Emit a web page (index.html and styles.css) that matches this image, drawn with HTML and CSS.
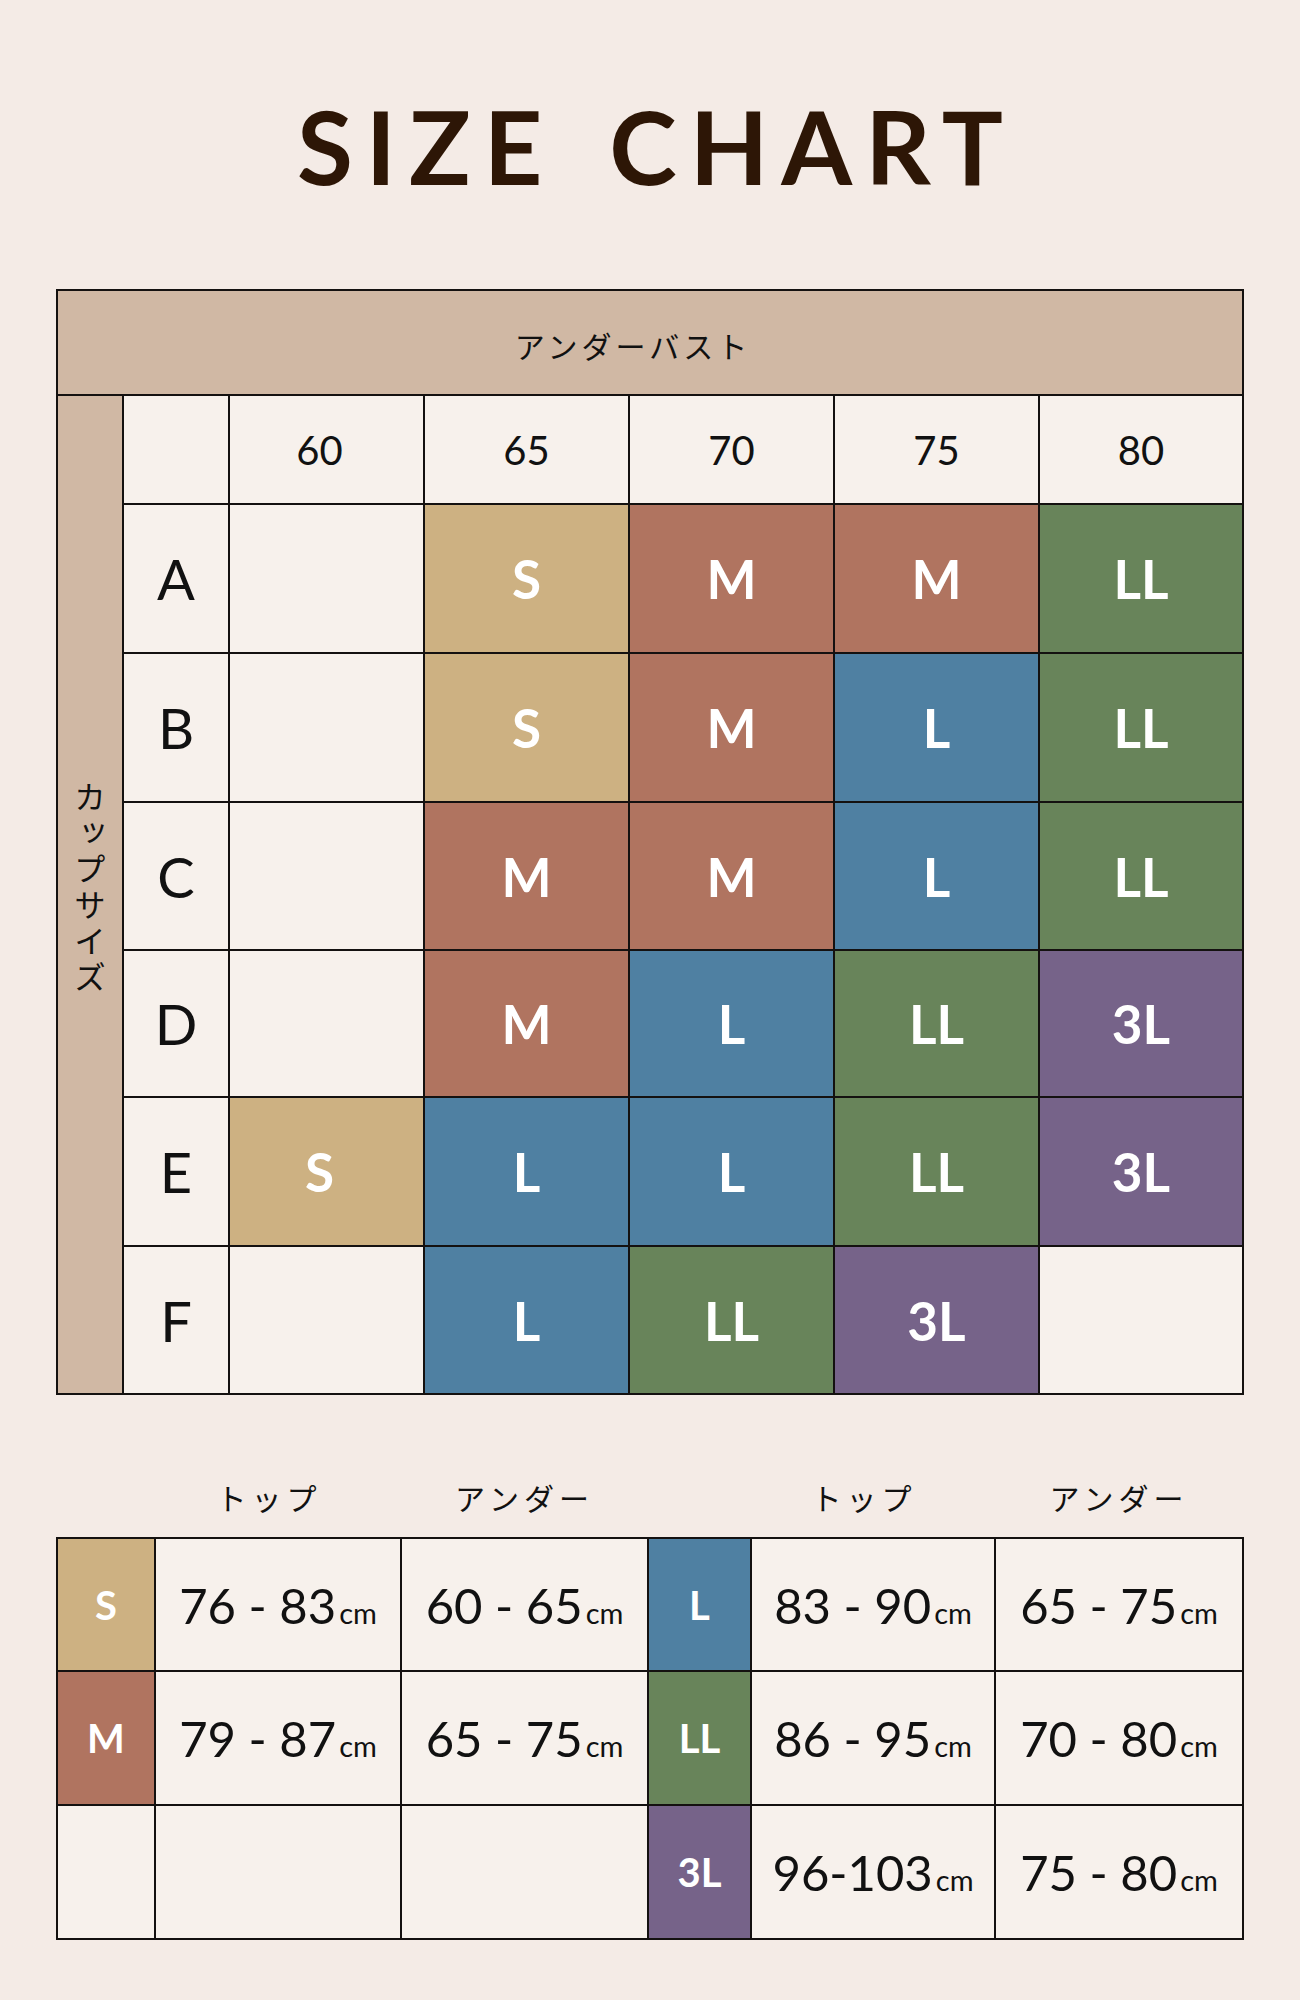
FILE: index.html
```html
<!DOCTYPE html>
<html lang="ja">
<head>
<meta charset="utf-8">
<title>SIZE CHART</title>
<link rel="stylesheet" href="styles.css">
</head>
<body>
<div class="page">
  <h1 class="title">SIZE CHART</h1>

  <div class="chart">
    <div class="hdr">アンダーバスト</div>
    <div class="cup"><span>カップサイズ</span></div>

    <div class="cell"></div>
    <div class="cell num c60">60</div>
    <div class="cell num">65</div>
    <div class="cell num">70</div>
    <div class="cell num">75</div>
    <div class="cell num">80</div>

    <div class="cell letter">A</div>
    <div class="cell"></div>
    <div class="cell sz s">S</div>
    <div class="cell sz m">M</div>
    <div class="cell sz m">M</div>
    <div class="cell sz ll">LL</div>

    <div class="cell letter">B</div>
    <div class="cell"></div>
    <div class="cell sz s">S</div>
    <div class="cell sz m">M</div>
    <div class="cell sz l">L</div>
    <div class="cell sz ll">LL</div>

    <div class="cell letter">C</div>
    <div class="cell"></div>
    <div class="cell sz m">M</div>
    <div class="cell sz m">M</div>
    <div class="cell sz l">L</div>
    <div class="cell sz ll">LL</div>

    <div class="cell letter">D</div>
    <div class="cell"></div>
    <div class="cell sz m">M</div>
    <div class="cell sz l">L</div>
    <div class="cell sz ll">LL</div>
    <div class="cell sz xl">3L</div>

    <div class="cell letter">E</div>
    <div class="cell sz s c60">S</div>
    <div class="cell sz l">L</div>
    <div class="cell sz l">L</div>
    <div class="cell sz ll">LL</div>
    <div class="cell sz xl">3L</div>

    <div class="cell letter">F</div>
    <div class="cell"></div>
    <div class="cell sz l">L</div>
    <div class="cell sz ll">LL</div>
    <div class="cell sz xl">3L</div>
    <div class="cell"></div>
  </div>

  <div class="legend-head">
    <div></div>
    <div class="lh top">トップ</div>
    <div class="lh">アンダー</div>
    <div></div>
    <div class="lh top">トップ</div>
    <div class="lh">アンダー</div>
  </div>

  <div class="legend">
    <div class="cell lab s">S</div>
    <div class="cell range"><span>76 - 83<span class="cm">cm</span></span></div>
    <div class="cell range"><span>60 - 65<span class="cm">cm</span></span></div>
    <div class="cell lab l">L</div>
    <div class="cell range"><span>83 - 90<span class="cm">cm</span></span></div>
    <div class="cell range"><span>65 - 75<span class="cm">cm</span></span></div>

    <div class="cell lab m">M</div>
    <div class="cell range"><span>79 - 87<span class="cm">cm</span></span></div>
    <div class="cell range"><span>65 - 75<span class="cm">cm</span></span></div>
    <div class="cell lab ll">LL</div>
    <div class="cell range"><span>86 - 95<span class="cm">cm</span></span></div>
    <div class="cell range"><span>70 - 80<span class="cm">cm</span></span></div>

    <div class="cell"></div>
    <div class="cell"></div>
    <div class="cell"></div>
    <div class="cell lab xl">3L</div>
    <div class="cell range"><span>96-103<span class="cm">cm</span></span></div>
    <div class="cell range"><span>75 - 80<span class="cm">cm</span></span></div>
  </div>
</div>
</body>
</html>
```

FILE: styles.css
```css
html, body {
  margin: 0;
  padding: 0;
  background: #f4ebe6;
}

body {
  min-height: 2000px;
  font-family: "Lato", "Noto Sans CJK JP", sans-serif;
  color: #111;
}

.page {
  width: 1188px;
  margin: 0 auto;
  padding-top: 86px;
}

.title {
  margin: 0;
  height: 120px;
  font-size: 102px;
  line-height: 120px;
  font-weight: 700;
  letter-spacing: 13px;
  word-spacing: 16px;
  padding-left: 13px;
  text-align: center;
  color: #2d1606;
}

/* main chart */
.chart {
  margin-top: 83px;
  display: grid;
  grid-template-columns: 64px 104px 193px 203px 203px 203px 202px;
  grid-template-rows: 103px 107px 147px 147px 146px 145px 147px 146px;
  gap: 2px;
  padding: 2px;
  background: #141110;
}

.cell {
  background: #f7f1ec;
  display: flex;
  align-items: center;
  justify-content: center;
}

.c60 {
  padding-right: 14px;
}

.hdr {
  grid-column: 1 / -1;
  grid-row: 1;
  background: #d0b8a4;
  display: flex;
  align-items: center;
  justify-content: center;
  font-family: "Noto Sans CJK JP", sans-serif;
  font-size: 30px;
  letter-spacing: 4px;
  padding-top: 4px;
  padding-right: 34px;
}

.cup {
  grid-column: 1;
  grid-row: 2 / -1;
  background: #d0b8a4;
  display: flex;
  align-items: center;
  justify-content: center;
}

.cup span {
  writing-mode: vertical-rl;
  font-family: "Noto Sans CJK JP", sans-serif;
  font-size: 32px;
  letter-spacing: 4px;
  margin-top: -12px;
}

.num {
  font-size: 40px;
}

.letter {
  font-size: 56px;
}

.sz {
  font-size: 53px;
  font-weight: 700;
}

.s { background: #cdb182; color: #fff; }
.m { background: #b07460; color: #fff; }
.l { background: #4f80a2; color: #fff; }
.ll { background: #68845a; color: #fff; }
.xl { background: #766389; color: #fff; }

/* legend */
.legend-head {
  margin-top: 72px;
  height: 60px;
  margin-bottom: 10px;
  display: grid;
  grid-template-columns: 96px 244px 245px 101px 242px 246px;
  gap: 2px;
  padding: 0 2px;
}

.lh {
  display: flex;
  align-items: center;
  justify-content: center;
  font-family: "Noto Sans CJK JP", sans-serif;
  font-size: 30px;
  letter-spacing: 5px;
}

.lh.top {
  padding-right: 18px;
}

.legend {
  display: grid;
  grid-template-columns: 96px 244px 245px 101px 242px 246px;
  grid-template-rows: 131px 132px 132px;
  gap: 2px;
  padding: 2px;
  background: #141110;
}

.lab {
  font-size: 40px;
  font-weight: 700;
}

.range {
  font-size: 49px;
}

.cm {
  font-size: 29px;
  margin-left: 3px;
}
```
